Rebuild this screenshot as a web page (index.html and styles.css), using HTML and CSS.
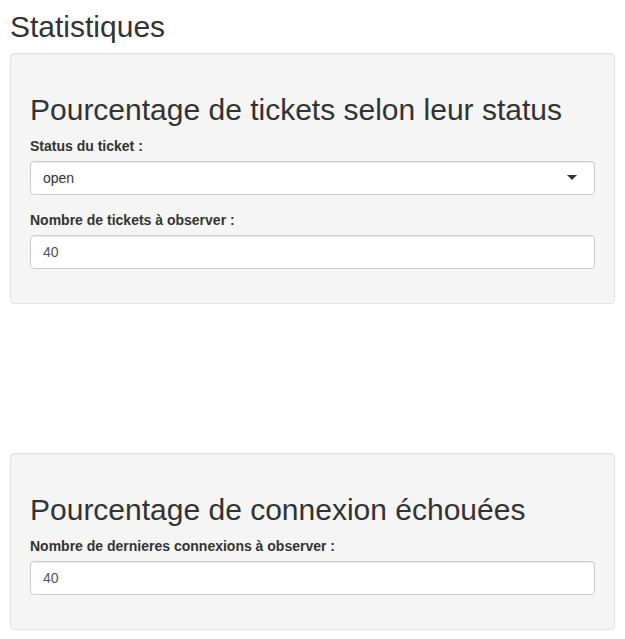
FILE: index.html
```html
<!DOCTYPE html>
<html lang="fr">
<head>
<meta charset="utf-8">
<title>Statistiques</title>
<link rel="stylesheet" href="styles.css">
</head>
<body>
<div class="page">
  <h2 class="title">Statistiques</h2>

  <div class="well">
    <h2 class="well-title">Pourcentage de tickets selon leur status</h2>
    <div class="form-group">
      <label class="control-label">Status du ticket :</label>
      <div class="select">open</div>
    </div>
    <div class="form-group">
      <label class="control-label">Nombre de tickets à observer :</label>
      <input class="form-control" type="number" value="40">
    </div>
  </div>

  <div class="plot-space"></div>

  <div class="well">
    <h2 class="well-title">Pourcentage de connexion échouées</h2>
    <div class="form-group">
      <label class="control-label">Nombre de dernieres connexions à observer :</label>
      <input class="form-control" type="number" value="40">
    </div>
  </div>
</div>
</body>
</html>
```

FILE: styles.css
```css
* {
  box-sizing: border-box;
}

html, body {
  margin: 0;
  padding: 0;
  background: #fff;
}

body {
  font-family: "Liberation Sans", Arial, sans-serif;
  font-size: 14px;
  line-height: 1.42857143;
  color: #333;
}

.page {
  padding: 0 10px;
}

h2 {
  font-size: 30px;
  font-weight: 500;
  line-height: 1.1;
  margin: 20px 0 10px;
}

.title {
  margin-top: 10px;
}

.well {
  background: #f5f5f5;
  border: 1px solid #e3e3e3;
  border-radius: 4px;
  box-shadow: inset 0 1px 1px rgba(0, 0, 0, 0.05);
  padding: 19px;
  margin-bottom: 20px;
}

.form-group {
  margin-bottom: 15px;
}

.control-label {
  display: inline-block;
  max-width: 100%;
  margin-bottom: 5px;
  font-weight: bold;
}

.select {
  position: relative;
  height: 34px;
  padding: 6px 12px;
  background: #fff;
  border: 1px solid #ccc;
  border-radius: 4px;
  box-shadow: inset 0 1px 1px rgba(0, 0, 0, 0.075);
  color: #333;
  line-height: 20px;
}

.select::after {
  content: "";
  position: absolute;
  right: 17px;
  top: 50%;
  margin-top: -3px;
  width: 0;
  height: 0;
  border-style: solid;
  border-width: 5px 5px 0 5px;
  border-color: #333 transparent transparent transparent;
}

.form-control {
  display: block;
  width: 100%;
  height: 34px;
  padding: 6px 12px;
  font-family: inherit;
  font-size: 14px;
  line-height: 1.42857143;
  color: #555;
  background: #fff;
  border: 1px solid #ccc;
  border-radius: 4px;
  box-shadow: inset 0 1px 1px rgba(0, 0, 0, 0.075);
  -moz-appearance: textfield;
  margin: 0;
}

.form-control::-webkit-outer-spin-button,
.form-control::-webkit-inner-spin-button {
  -webkit-appearance: none;
  margin: 0;
}

.plot-space {
  height: 129px;
}
```
